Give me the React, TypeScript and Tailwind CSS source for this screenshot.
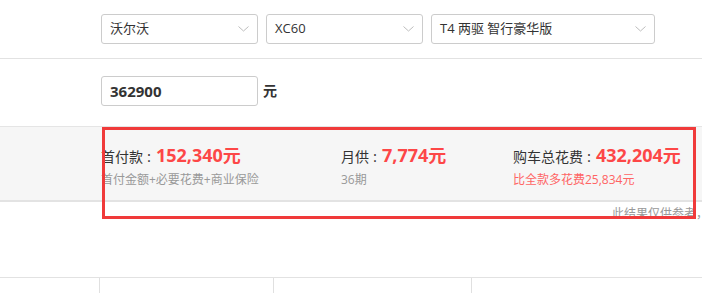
import React from "react";

const Chevron = () => (
  <svg width="11" height="6" viewBox="0 0 11 6" fill="none" className="shrink-0">
    <path d="M0.5 0.5 L5.5 5 L10.5 0.5" stroke="#bdbdbd" strokeWidth="1" />
  </svg>
);

const Select = ({ label, w }: { label: string; w: string }) => (
  <div
    className={`${w} h-[30px] border border-[#cccccc] rounded-[3px] bg-white flex items-center justify-between pl-[8px] pr-[8px] text-[13px] text-[#333333]`}
  >
    <span>{label}</span>
    <Chevron />
  </div>
);

const Stat = ({ label, value }: { label: string; value: string }) => (
  <div className="flex items-baseline h-[24px]">
    <span className="text-[14px] text-[#333333]">{label}</span>
    <span className="text-[15px] text-[#333333] ml-[4px] mr-[5px]">:</span>
    <span className="text-[18px] font-bold text-[#fd4747]">{value}</span>
  </div>
);

export default function App() {
  return (
    <div
      className="relative w-[702px] h-[293px] overflow-hidden bg-white"
      style={{ fontFamily: '"Open Sans", "Noto Sans CJK SC", sans-serif' }}
    >
      {/* Row 1 */}
      <div className="h-[59px] border-b border-[#e2e2e2] flex items-center pl-[101px] gap-[8px]">
        <Select label="沃尔沃" w="w-[157px]" />
        <Select label="XC60" w="w-[157px]" />
        <Select label="T4 两驱 智行豪华版" w="w-[224px]" />
      </div>

      {/* Row 2 */}
      <div className="h-[67px] pl-[101px] pt-[17px] flex items-start">
        <div className="w-[157px] h-[30px] border border-[#cccccc] rounded-[3px] flex items-center pl-[8px] text-[15px] font-bold text-[#333333]">
          362900
        </div>
        <span className="ml-[5px] mt-[4px] text-[14px] font-bold text-[#333333]">元</span>
      </div>

      {/* Result band */}
      <div className="h-[76px] border-t border-b-2 border-t-[#e5e5e5] border-b-[#e3e3e3] bg-[#f6f6f6] pl-[101px] pt-[15px] flex">
        <div className="w-[240px]">
          <Stat label="首付款" value="152,340元" />
          <div className="mt-[5px] text-[12px] leading-[18px] text-[#999999]">首付金额+必要花费+商业保险</div>
        </div>
        <div className="w-[172px]">
          <Stat label="月供" value="7,774元" />
          <div className="mt-[5px] text-[12px] leading-[18px] text-[#999999]">36期</div>
        </div>
        <div>
          <Stat label="购车总花费" value="432,204元" />
          <div className="mt-[5px] text-[12px] leading-[18px] text-[#ff6464]">比全款多花费25,834元</div>
        </div>
      </div>

      {/* Note */}
      <div className="mt-[4px] pl-[612px] h-[16px] text-[12px] leading-[16px] text-[#999999] whitespace-nowrap">
        此结果仅供参考，具体以实际为准
      </div>

      {/* Table header */}
      <div className="mt-[55px] border-t border-[#e2e2e2] h-[20px] flex">
        <div className="w-[100px] border-r border-[#e0e0e0]" />
        <div className="w-[174px] border-r border-[#e0e0e0]" />
        <div className="w-[198px] border-r border-[#e0e0e0]" />
        <div className="flex-1" />
      </div>

      {/* Annotation box */}
      <div className="absolute left-[102px] top-[127px] w-[594px] h-[92px] border-[3px] border-[#f03a3a] pointer-events-none" />
    </div>
  );
}
